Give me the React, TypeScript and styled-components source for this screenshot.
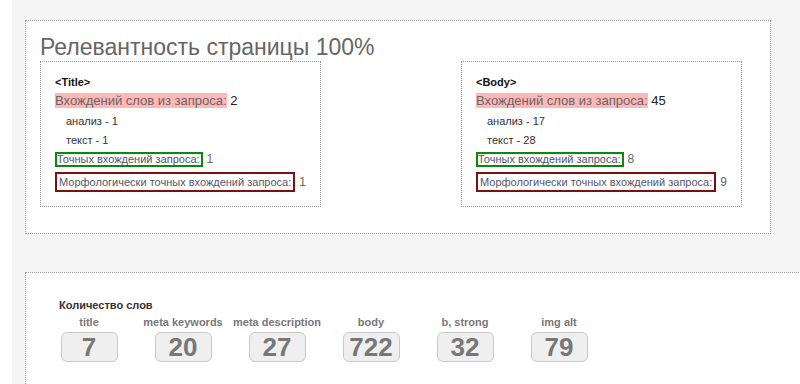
import styled, { createGlobalStyle } from 'styled-components'

const Global = createGlobalStyle`
  html, body {
    margin: 0;
    padding: 0;
    background: #fff;
    font-family: "Liberation Sans", Arial, sans-serif;
  }
  #root {
    width: 800px;
    height: 384px;
    overflow: hidden;
  }
`

const Page = styled.div`
  margin-left: 12px;
  background: #f5f5f5;
  height: 384px;
  padding: 20px 0 0 13px;
  box-sizing: border-box;
`

const Panel = styled.section<{ $width: number }>`
  width: ${p => p.$width}px;
  box-sizing: border-box;
  background: #fff;
  border: 1px dotted #999;
`

const RelevancePanel = styled(Panel)`
  height: 214px;
  padding: 12px 0 0 14px;
`

const Heading = styled.h1`
  margin: 0;
  font-weight: normal;
  font-size: 23px;
  line-height: 28px;
  color: #666;
`

const Boxes = styled.div`
  display: flex;
  gap: 140px;
`

const TagBox = styled.div`
  width: 281px;
  height: 146px;
  box-sizing: border-box;
  border: 1px dotted #999;
  padding: 12px 0 0 14px;
  color: #222;
`

const TagName = styled.div`
  font-weight: bold;
  font-size: 11px;
  color: #111;
  line-height: 16px;
  margin-bottom: 3px;
`

const TotalLine = styled.div`
  font-size: 13px;
  line-height: 15px;
  margin-bottom: 6px;
`

const Hl = styled.span`
  background: #ffb7b7;
  color: #666;
`

const WordLine = styled.div`
  font-size: 11px;
  line-height: 15px;
  margin-bottom: 4px;
  padding-left: 11px;
  color: #333;
`

const FramedLine = styled.div`
  font-size: 12px;
  color: #666;
  margin-bottom: 5px;
`

const Framed = styled.span<{ $color: string; $pad: string; $lh: number }>`
  display: inline-block;
  border: 2px solid ${p => p.$color};
  padding: ${p => p.$pad};
  font-size: 11px;
  line-height: ${p => p.$lh}px;
  color: #556;
  margin-right: 4px;
`

const CountPanel = styled(Panel)`
  margin-top: 38px;
  height: 200px;
  border-right: none;
  padding: 24px 0 0 16px;
`

const CountTitle = styled.div`
  font-weight: bold;
  font-size: 11px;
  color: #333;
  line-height: 16px;
  margin: 0 0 3px 17px;
`

const Counts = styled.div`
  display: flex;
`

const Count = styled.div`
  width: 94px;
  display: flex;
  flex-direction: column;
  align-items: center;
`

const CountLabel = styled.div`
  font-weight: bold;
  font-size: 11px;
  color: #777;
  line-height: 13px;
  margin-bottom: 3px;
`

const CountValue = styled.div`
  width: 57px;
  height: 30px;
  box-sizing: border-box;
  border: 1px solid #c8c8c8;
  border-radius: 6px;
  background: #efefef;
  color: #777;
  font-weight: bold;
  font-size: 26px;
  line-height: 29px;
  text-align: center;
`

type Stats = {
  tag: string
  total: number
  words: [string, number][]
  exact: number
  morph: number
}

const stats: Stats[] = [
  { tag: '<Title>', total: 2, words: [['анализ', 1], ['текст', 1]], exact: 1, morph: 1 },
  { tag: '<Body>', total: 45, words: [['анализ', 17], ['текст', 28]], exact: 8, morph: 9 },
]

const counts: [string, number][] = [
  ['title', 7],
  ['meta keywords', 20],
  ['meta description', 27],
  ['body', 722],
  ['b, strong', 32],
  ['img alt', 79],
]

export default function App() {
  return (
    <>
      <Global />
      <Page>
        <RelevancePanel $width={746}>
          <Heading>Релевантность страницы 100%</Heading>
          <Boxes>
            {stats.map(s => (
              <TagBox key={s.tag}>
                <TagName>{s.tag}</TagName>
                <TotalLine>
                  <Hl>Вхождений слов из запроса:</Hl> {s.total}
                </TotalLine>
                {s.words.map(([w, n]) => (
                  <WordLine key={w}>
                    {w} - {n}
                  </WordLine>
                ))}
                <FramedLine>
                  <Framed $color="#0a8a0a" $pad="0 1px 0 0" $lh={11}>
                    Точных вхождений запроса:
                  </Framed>
                  {s.exact}
                </FramedLine>
                <FramedLine>
                  <Framed $color="#7a1010" $pad="2px 2px 2px 2px" $lh={12}>
                    Морфологически точных вхождений запроса:
                  </Framed>
                  {s.morph}
                </FramedLine>
              </TagBox>
            ))}
          </Boxes>
        </RelevancePanel>
        <CountPanel $width={800}>
          <CountTitle>Количество слов</CountTitle>
          <Counts>
            {counts.map(([label, n]) => (
              <Count key={label}>
                <CountLabel>{label}</CountLabel>
                <CountValue>{n}</CountValue>
              </Count>
            ))}
          </Counts>
        </CountPanel>
      </Page>
    </>
  )
}
